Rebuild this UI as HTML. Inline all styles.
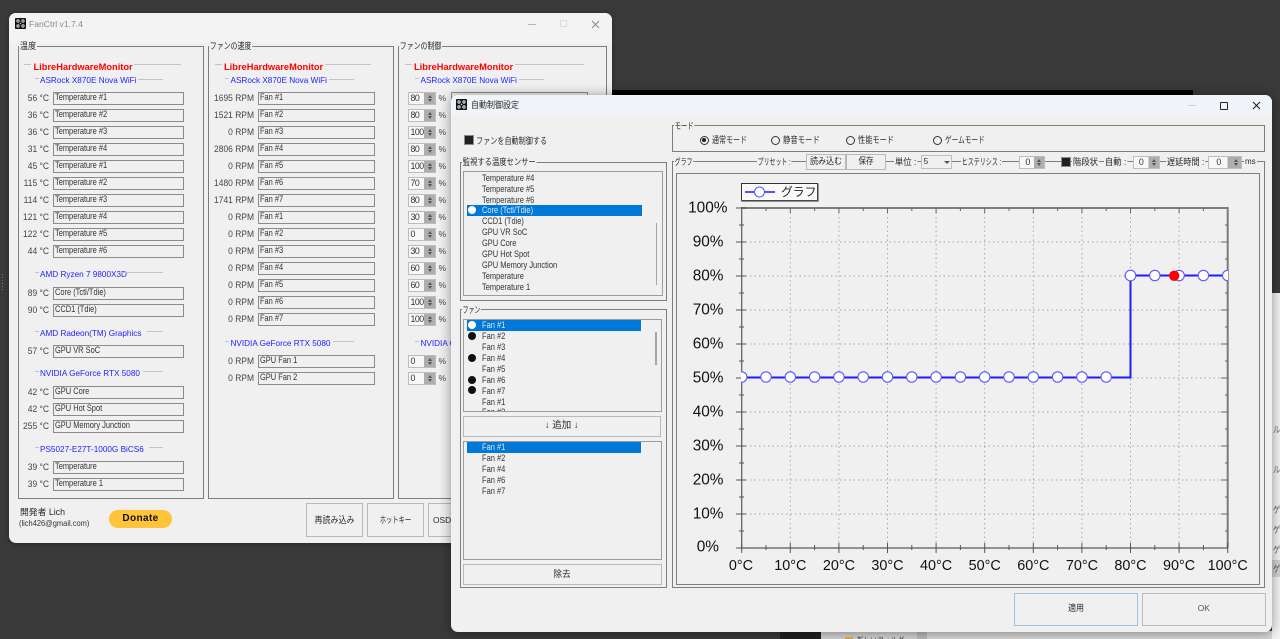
<!DOCTYPE html>
<html lang="ja"><head><meta charset="utf-8"><title>FanCtrl</title>
<style>
html,body{margin:0;padding:0;width:1280px;height:639px;overflow:hidden;background:#3a3a3a}
body{position:relative;font-family:"Liberation Sans","Noto Sans CJK JP",sans-serif;font-size:8.5px;color:#333}
div,span,i,svg{position:absolute;box-sizing:border-box}
i{font-style:normal}
.x{white-space:nowrap;line-height:10px}
.j{font-size:9px;white-space:nowrap;line-height:10px;color:#2a2a2a;transform:scaleX(var(--k,.8));transform-origin:0 50%}
.w{background:#f0f0f0;border-radius:7px;overflow:hidden}
.g{border:1.5px solid #7d7d7d}
.l{background:#f0f0f0;white-space:nowrap;line-height:10px;font-size:9px;padding:0 1px;color:#2a2a2a;transform:scaleX(var(--k,.8));transform-origin:0 50%}
.h{white-space:nowrap;line-height:10px;font-weight:bold;color:#f00;font-size:9.3px}
.n{white-space:nowrap;line-height:10px;color:#2222ff;font-size:8.2px}
.d{height:1px;background:#c4c4c4}
.r{left:0;width:0;height:13px}
.v{line-height:13px;text-align:right;white-space:nowrap;color:#444;left:0;font-size:9.2px;transform:scaleX(.92);transform-origin:100% 50%}
.f{height:13px;border:1.7px solid #8b8b8b;background:#f0f0f0;overflow:hidden}
.f span{left:1px;top:0;line-height:9px;white-space:nowrap;font-size:9.2px;transform:scaleX(.81);transform-origin:0 0;color:#333}
.a .v{width:49px}.a .f{left:53px;width:130.5px}
.b .v{width:254px}.b .f{left:258px;width:116.5px}
.s{height:13px;width:27.5px;left:408px;background:linear-gradient(90deg,#f8f8f8 58%,#aeaeae 58%);border:1px solid #bdbdbd;line-height:10.5px;padding-left:1.5px;color:#333;letter-spacing:-.5px;font-size:8.8px}
.s::before,.s::after{content:"";position:absolute;right:3px;border-left:2.5px solid transparent;border-right:2.5px solid transparent}
.s::before{top:2px;border-bottom:3px solid #555}
.s::after{bottom:2px;border-top:3px solid #555}
.p{left:438.5px;line-height:13px;color:#444}
.bt{border:1.7px solid #b9b9b9;background:#f0f0f0;text-align:center;color:#2a2a2a;font-size:9px;white-space:nowrap}
.bt u{position:static;display:inline-block;text-decoration:none;transform:scaleX(var(--k,.89))}
.lb{border:1.5px solid #9c9c9c;background:#f0f0f0;overflow:hidden}
.it{left:482px;line-height:10px;white-space:nowrap;transform:scaleX(.83);transform-origin:0 0;color:#333;font-size:9px}
.sel{background:#0078d7}
.dot{width:8px;height:8px;border-radius:50%;background:#111;left:468px}
.rd{width:9px;height:9px;border-radius:50%;border:1px solid #333;background:#f0f0f0;top:135.5px}
.ck{width:10px;height:10px;border:1.5px solid #8b8b8b;background:#222}
</style></head><body>

<!-- desktop background bits -->
<div style="left:612px;top:90px;width:581px;height:6px;background:#000"></div>
<div style="left:780px;top:631px;width:41px;height:8px;background:#1f1f1f"></div>
<div style="left:821px;top:631px;width:96px;height:8px;background:#d4d4d4"></div>
<div style="left:917px;top:631px;width:10px;height:8px;background:#bdbdbd"></div>
<div style="left:927px;top:631px;width:353px;height:8px;background:#d8d8d8"></div>
<div style="left:1272px;top:293px;width:8px;height:346px;background:#f3f3f3"></div>
<div style="left:1272px;top:560px;width:8px;height:17px;background:#d2d2d2"></div>
<div class="j" style="left:1273px;top:425px;color:#666;--k:.8">ル</div>
<div class="j" style="left:1273px;top:465px;color:#666;--k:.8">ル</div>
<div class="j" style="left:1273px;top:505px;color:#555;--k:.8">ゲ</div>
<div class="j" style="left:1273px;top:525px;color:#555;--k:.8">ゲ</div>
<div class="j" style="left:1273px;top:545px;color:#555;--k:.8">ゲ</div>
<div class="j" style="left:1273px;top:564px;color:#555;--k:.8">ゲ</div>
<div style="left:845px;top:637px;width:8px;height:2px;background:#e2b04a"></div>
<div class="j" style="left:857px;top:635.5px;color:#444;--k:.75">新しいフォルダー</div>
<div style="left:2px;top:274px;width:1px;height:16px;background:repeating-linear-gradient(180deg,#777 0 1px,transparent 1px 3px)"></div>

<!-- main window -->
<div class="w" style="left:9px;top:13px;width:603px;height:530px;box-shadow:0 1px 6px rgba(0,0,0,.35)">
<div style="left:0;top:0;width:603px;height:30px;background:#f3f3f3"></div>
</div>
<div style="left:0;top:0;width:1280px;height:639px">
<svg style="left:15px;top:18px" width="11" height="11" viewBox="0 0 11 11"><rect width="11" height="11" rx="1" fill="#111"/><circle cx="3" cy="3" r="1.7" fill="#ccc"/><circle cx="8" cy="3" r="1.7" fill="#ccc"/><circle cx="3" cy="8" r="1.7" fill="#ccc"/><circle cx="8" cy="8" r="1.7" fill="#ccc"/><circle cx="3" cy="3" r=".6" fill="#111"/><circle cx="8" cy="3" r=".6" fill="#111"/><circle cx="3" cy="8" r=".6" fill="#111"/><circle cx="8" cy="8" r=".6" fill="#111"/><circle cx="5.5" cy="5.5" r=".7" fill="#ccc"/></svg>
<div class="x" style="left:29px;top:19px;color:#8a8a8a;font-size:8.6px">FanCtrl v1.7.4</div>
<div style="left:528px;top:24px;width:8px;height:1px;background:#b5b5b5"></div>
<div style="left:560px;top:20px;width:7px;height:7px;border:1px solid #dcdcdc"></div>
<svg style="left:591px;top:19.5px" width="9" height="9"><path d="M1 1L8 8M8 1L1 8" stroke="#888" fill="none"/></svg>

<!-- group 1 -->
<div class="g" style="left:17.5px;top:46px;width:186px;height:452.5px"></div>
<div class="l" style="left:19px;top:41px;--k:.9">温度</div>
<div class="g" style="left:207.5px;top:46px;width:186px;height:452.5px"></div>
<div class="l" style="left:208.5px;top:41px;--k:.77">ファンの速度</div>
<div class="g" style="left:397.5px;top:46px;width:209px;height:452.5px"></div>
<div class="l" style="left:398.5px;top:41px;--k:.77">ファンの制御</div>

<div class="d" style="left:24px;top:64px;width:7px"></div><div class="h" style="left:33.5px;top:62px">LibreHardwareMonitor</div><div class="d" style="left:134px;top:64px;width:47px"></div>
<div class="d" style="left:34.5px;top:78px;width:4px"></div><div class="n" style="left:40px;top:76px">ASRock X870E Nova WiFi</div><div class="d" style="left:138px;top:78.5px;width:25px"></div>

<div class="a" style="left:0;top:0">
<div class="r" style="top:92px"><span class="v">56 °C</span><span class="f"><span>Temperature #1</span></span></div>
<div class="r" style="top:109px"><span class="v">36 °C</span><span class="f"><span>Temperature #2</span></span></div>
<div class="r" style="top:126px"><span class="v">36 °C</span><span class="f"><span>Temperature #3</span></span></div>
<div class="r" style="top:143px"><span class="v">31 °C</span><span class="f"><span>Temperature #4</span></span></div>
<div class="r" style="top:160px"><span class="v">45 °C</span><span class="f"><span>Temperature #1</span></span></div>
<div class="r" style="top:177px"><span class="v">115 °C</span><span class="f"><span>Temperature #2</span></span></div>
<div class="r" style="top:194px"><span class="v">114 °C</span><span class="f"><span>Temperature #3</span></span></div>
<div class="r" style="top:211px"><span class="v">121 °C</span><span class="f"><span>Temperature #4</span></span></div>
<div class="r" style="top:228px"><span class="v">122 °C</span><span class="f"><span>Temperature #5</span></span></div>
<div class="r" style="top:245px"><span class="v">44 °C</span><span class="f"><span>Temperature #6</span></span></div>
<div class="r" style="top:287px"><span class="v">89 °C</span><span class="f"><span>Core (Tctl/Tdie)</span></span></div>
<div class="r" style="top:304px"><span class="v">90 °C</span><span class="f"><span>CCD1 (Tdie)</span></span></div>
<div class="r" style="top:345px"><span class="v">57 °C</span><span class="f"><span>GPU VR SoC</span></span></div>
<div class="r" style="top:386px"><span class="v">42 °C</span><span class="f"><span>GPU Core</span></span></div>
<div class="r" style="top:403px"><span class="v">42 °C</span><span class="f"><span>GPU Hot Spot</span></span></div>
<div class="r" style="top:420px"><span class="v">255 °C</span><span class="f"><span>GPU Memory Junction</span></span></div>
<div class="r" style="top:461px"><span class="v">39 °C</span><span class="f"><span>Temperature</span></span></div>
<div class="r" style="top:478px"><span class="v">39 °C</span><span class="f"><span>Temperature 1</span></span></div>
</div>
<div class="d" style="left:34.5px;top:272px;width:4px"></div><div class="n" style="left:40px;top:270px">AMD Ryzen 7 9800X3D</div><div class="d" style="left:120px;top:272px;width:43px"></div>
<div class="d" style="left:34.5px;top:331px;width:4px"></div><div class="n" style="left:40px;top:329px">AMD Radeon(TM) Graphics</div><div class="d" style="left:147px;top:331px;width:16px"></div>
<div class="d" style="left:34.5px;top:371px;width:4px"></div><div class="n" style="left:40px;top:369px">NVIDIA GeForce RTX 5080</div><div class="d" style="left:143px;top:371px;width:20px"></div>
<div class="d" style="left:34.5px;top:447px;width:4px"></div><div class="n" style="left:40px;top:445px">PS5027-E27T-1000G BiCS6</div><div class="d" style="left:149px;top:447px;width:14px"></div>

<!-- group 2 -->
<div class="d" style="left:215px;top:64px;width:7px"></div><div class="h" style="left:224px;top:62px">LibreHardwareMonitor</div><div class="d" style="left:325px;top:64px;width:46px"></div>
<div class="d" style="left:225px;top:78px;width:4px"></div><div class="n" style="left:230.5px;top:76px">ASRock X870E Nova WiFi</div><div class="d" style="left:329px;top:78.5px;width:25px"></div>
<div class="b" style="left:0;top:0">
<div class="r" style="top:92px"><span class="v">1695 RPM</span><span class="f"><span>Fan #1</span></span></div>
<div class="r" style="top:109px"><span class="v">1521 RPM</span><span class="f"><span>Fan #2</span></span></div>
<div class="r" style="top:126px"><span class="v">0 RPM</span><span class="f"><span>Fan #3</span></span></div>
<div class="r" style="top:143px"><span class="v">2806 RPM</span><span class="f"><span>Fan #4</span></span></div>
<div class="r" style="top:160px"><span class="v">0 RPM</span><span class="f"><span>Fan #5</span></span></div>
<div class="r" style="top:177px"><span class="v">1480 RPM</span><span class="f"><span>Fan #6</span></span></div>
<div class="r" style="top:194px"><span class="v">1741 RPM</span><span class="f"><span>Fan #7</span></span></div>
<div class="r" style="top:211px"><span class="v">0 RPM</span><span class="f"><span>Fan #1</span></span></div>
<div class="r" style="top:228px"><span class="v">0 RPM</span><span class="f"><span>Fan #2</span></span></div>
<div class="r" style="top:245px"><span class="v">0 RPM</span><span class="f"><span>Fan #3</span></span></div>
<div class="r" style="top:262px"><span class="v">0 RPM</span><span class="f"><span>Fan #4</span></span></div>
<div class="r" style="top:279px"><span class="v">0 RPM</span><span class="f"><span>Fan #5</span></span></div>
<div class="r" style="top:296px"><span class="v">0 RPM</span><span class="f"><span>Fan #6</span></span></div>
<div class="r" style="top:313px"><span class="v">0 RPM</span><span class="f"><span>Fan #7</span></span></div>
<div class="r" style="top:355px"><span class="v">0 RPM</span><span class="f"><span>GPU Fan 1</span></span></div>
<div class="r" style="top:372px"><span class="v">0 RPM</span><span class="f"><span>GPU Fan 2</span></span></div>
</div>
<div class="d" style="left:225px;top:341px;width:4px"></div><div class="n" style="left:230.5px;top:339px">NVIDIA GeForce RTX 5080</div><div class="d" style="left:333px;top:341px;width:21px"></div>

<!-- group 3 -->
<div class="d" style="left:405px;top:64px;width:7px"></div><div class="h" style="left:414px;top:62px">LibreHardwareMonitor</div><div class="d" style="left:515px;top:64px;width:69px"></div>
<div class="d" style="left:415px;top:78px;width:4px"></div><div class="n" style="left:420.5px;top:76px">ASRock X870E Nova WiFi</div><div class="d" style="left:519px;top:78.5px;width:25px"></div>
<div class="f" style="left:451px;top:92px;width:136.5px"></div>
<div class="s" style="top:92px">80</div><div class="p" style="top:92px">%</div>
<div class="s" style="top:109px">80</div><div class="p" style="top:109px">%</div>
<div class="s" style="top:126px">100</div><div class="p" style="top:126px">%</div>
<div class="s" style="top:143px">80</div><div class="p" style="top:143px">%</div>
<div class="s" style="top:160px">100</div><div class="p" style="top:160px">%</div>
<div class="s" style="top:177px">70</div><div class="p" style="top:177px">%</div>
<div class="s" style="top:194px">80</div><div class="p" style="top:194px">%</div>
<div class="s" style="top:211px">30</div><div class="p" style="top:211px">%</div>
<div class="s" style="top:228px">0</div><div class="p" style="top:228px">%</div>
<div class="s" style="top:245px">30</div><div class="p" style="top:245px">%</div>
<div class="s" style="top:262px">60</div><div class="p" style="top:262px">%</div>
<div class="s" style="top:279px">60</div><div class="p" style="top:279px">%</div>
<div class="s" style="top:296px">100</div><div class="p" style="top:296px">%</div>
<div class="s" style="top:313px">100</div><div class="p" style="top:313px">%</div>
<div class="s" style="top:355px">0</div><div class="p" style="top:355px">%</div>
<div class="s" style="top:372px">0</div><div class="p" style="top:372px">%</div>
<div class="d" style="left:415px;top:341px;width:4px"></div><div class="n" style="left:420.5px;top:339px">NVIDIA GeForce RTX 5080</div>

<!-- main footer -->
<div class="j" style="left:20px;top:507px;font-size:8.8px;--k:1">開発者 Lich</div>
<div class="x" style="left:19px;top:518px;font-size:8.6px;transform:scaleX(.87);transform-origin:0 0">(lich426@gmail.com)</div>
<div style="left:109px;top:510px;width:63px;height:18px;border-radius:9px;background:#ffc439;text-align:center;font-weight:bold;font-size:10px;line-height:18px;color:#111;letter-spacing:.4px">Donate</div>
<div class="bt" style="left:306px;top:503px;width:57px;height:34px;line-height:32px"><u>再読み込み</u></div>
<div class="bt" style="left:367px;top:503px;width:57px;height:34px;line-height:32px"><u style="--k:.7">ホットキー</u></div>
<div class="bt" style="left:428px;top:503px;width:57px;height:34px;line-height:32px;text-align:left;padding-left:4px;font-size:8.4px">OSD</div>
</div>

<!-- second window -->
<div class="w" style="left:451px;top:95px;width:821px;height:536.5px;box-shadow:0 1px 12px rgba(0,0,0,.42)">
<div style="left:0;top:0;width:821px;height:21px;background:#f1f5fa"></div>
</div>
<svg style="left:456px;top:99px" width="11" height="11" viewBox="0 0 11 11"><rect width="11" height="11" rx="1" fill="#111"/><circle cx="3" cy="3" r="1.7" fill="#ddd"/><circle cx="8" cy="3" r="1.7" fill="#ddd"/><circle cx="3" cy="8" r="1.7" fill="#ddd"/><circle cx="8" cy="8" r="1.7" fill="#ddd"/><circle cx="3" cy="3" r=".6" fill="#111"/><circle cx="8" cy="3" r=".6" fill="#111"/><circle cx="3" cy="8" r=".6" fill="#111"/><circle cx="8" cy="8" r=".6" fill="#111"/><circle cx="5.5" cy="5.5" r=".7" fill="#ddd"/></svg>
<div class="j" style="left:471px;top:100px;--k:.89">自動制御設定</div>
<div style="left:1188px;top:105px;width:8px;height:1px;background:#d0d0d0"></div>
<div style="left:1220px;top:102px;width:7.5px;height:7.5px;border:1.2px solid #222;border-radius:1px"></div>
<svg style="left:1252px;top:101px" width="9" height="9"><path d="M1 1L8 8M8 1L1 8" stroke="#222" fill="none" stroke-width="1.1"/></svg>

<div class="ck" style="left:464px;top:135px"></div>
<div class="j" style="left:476px;top:136px;--k:.79">ファンを自動制御する</div>

<!-- mode -->
<div class="g" style="left:672px;top:125px;width:593px;height:26.5px"></div>
<div class="l" style="left:674px;top:120.5px;--k:.7">モード</div>
<div class="rd" style="left:699.5px"><i style="left:1.8px;top:1.8px;width:3.6px;height:3.6px;border-radius:50%;background:#222"></i></div>
<div class="j" style="left:712px;top:135px;--k:.78">通常モード</div>
<div class="rd" style="left:771px"></div><div class="j" style="left:783px;top:135px;--k:.82">静音モード</div>
<div class="rd" style="left:845.5px"></div><div class="j" style="left:858px;top:135px;--k:.8">性能モード</div>
<div class="rd" style="left:933px"></div><div class="j" style="left:945px;top:135px;--k:.74">ゲームモード</div>

<!-- graph group -->
<div class="g" style="left:672px;top:161px;width:593px;height:427px"></div>
<div class="g" style="left:676px;top:173px;width:584px;height:412px"></div>
<div class="l" style="left:673.5px;top:156.5px;--k:.66">グラフ</div>
<div class="l" style="left:757px;top:156.5px;--k:.66">プリセット :</div>
<div class="bt" style="left:806px;top:154px;width:39.5px;height:15.5px;line-height:12.5px"><u>読み込む</u></div>
<div class="bt" style="left:846px;top:154px;width:39.5px;height:15.5px;line-height:12.5px"><u style="--k:.83">保存</u></div>
<div class="l" style="left:893.5px;top:156.5px;--k:.93">単位 :</div>
<div style="left:921px;top:155px;width:31px;height:14px;border:1px solid #c0c0c0;background:#f0f0f0;line-height:10px;padding-left:1.5px;font-size:8.4px">5</div>
<div style="left:944px;top:161px;border-left:3px solid transparent;border-right:3px solid transparent;border-top:3px solid #555"></div>
<div class="l" style="left:960.5px;top:156.5px;--k:.67">ヒステリシス :</div>
<div class="s" style="left:1019px;top:155.5px;width:26px">&nbsp;&nbsp;0</div>
<div class="ck" style="left:1060.5px;top:157px"></div>
<div class="l" style="left:1072px;top:157px;--k:.93">階段状</div>
<div class="l" style="left:1104px;top:156.5px;--k:.93">自動 :</div>
<div class="s" style="left:1132.5px;top:156px;width:27px">&nbsp;&nbsp;0</div>
<div class="l" style="left:1165.5px;top:156.5px;--k:.91">遅延時間 :</div>
<div class="s" style="left:1208px;top:156px;width:34px">&nbsp;&nbsp;&nbsp;0</div>
<div class="l" style="left:1244px;top:157px;font-size:8px;--k:1">ms</div>

<!-- chart -->
<svg style="left:0;top:0" width="1280" height="639" viewBox="0 0 1280 639" font-family="Liberation Sans, sans-serif">
<defs><clipPath id="c"><rect x="741" y="200" width="487" height="350"/></clipPath></defs>
<path d="M790.3 208V548M838.9 208V548M887.5 208V548M936.1 208V548M984.7 208V548M1033.3 208V548M1081.9 208V548M1130.5 208V548M1179.1 208V548M741 242H1228M741 276H1228M741 310H1228M741 344H1228M741 378H1228M741 412H1228M741 446H1228M741 480H1228M741 514H1228" stroke="#a8a8a8" stroke-width="1" stroke-dasharray="1.5 3" fill="none"/>
<path d="M741.7 208H1227.7V548" stroke="#7c7c7c" stroke-width="2" fill="none"/>
<path d="M741.7 207V548H1227.7" stroke="#5a5a5a" stroke-width="1.2" fill="none"/>
<path d="M736 208H746M736 242H746M736 276H746M736 310H746M736 344H746M736 378H746M736 412H746M736 446H746M736 480H746M736 514H746M736 548H746M739 225H744M739 259H744M739 293H744M739 327H744M739 361H744M739 395H744M739 429H744M739 463H744M739 497H744M739 531H744M741.7 543V553M790.3 543V553M838.9 543V553M887.5 543V553M936.1 543V553M984.7 543V553M1033.3 543V553M1081.9 543V553M1130.5 543V553M1179.1 543V553M1227.7 543V553M766 545V550M814.6 545V550M863.2 545V550M911.8 545V550M960.4 545V550M1009 545V550M1057.6 545V550M1106.2 545V550M1154.8 545V550M1203.4 545V550" stroke="#555" stroke-width="1" fill="none"/>
<path d="M1221 242H1228M1221 276H1228M1221 310H1228M1221 344H1228M1221 378H1228M1221 412H1228M1221 446H1228M1221 480H1228M1221 514H1228M1225 225H1228M1225 259H1228M1225 293H1228M1225 327H1228M1225 361H1228M1225 395H1228M1225 429H1228M1225 463H1228M1225 497H1228M1225 531H1228M790.3 208V213M838.9 208V213M887.5 208V213M936.1 208V213M984.7 208V213M1033.3 208V213M1081.9 208V213M1130.5 208V213M1179.1 208V213M766 208V211M814.6 208V211M863.2 208V211M911.8 208V211M960.4 208V211M1009 208V211M1057.6 208V211M1106.2 208V211M1154.8 208V211M1203.4 208V211" stroke="#666" stroke-width="1" fill="none"/>
<g font-size="15.4" fill="#111" text-anchor="end">
<text x="727.5" y="212.5">100%</text><text x="723.5" y="246.5">90%</text><text x="723.5" y="280.5">80%</text><text x="723.5" y="314.5">70%</text><text x="723.5" y="348.5">60%</text><text x="723.5" y="382.5">50%</text><text x="723.5" y="416.5">40%</text><text x="723.5" y="450.5">30%</text><text x="723.5" y="484.5">20%</text><text x="723.5" y="518.5">10%</text><text x="719" y="551.5">0%</text>
</g>
<g font-size="14.4" fill="#111" text-anchor="middle">
<text x="741" y="570">0°C</text><text x="790.3" y="570">10°C</text><text x="838.9" y="570">20°C</text><text x="887.5" y="570">30°C</text><text x="936.1" y="570">40°C</text><text x="984.7" y="570">50°C</text><text x="1033.3" y="570">60°C</text><text x="1081.9" y="570">70°C</text><text x="1130.5" y="570">80°C</text><text x="1179.1" y="570">90°C</text><text x="1227.7" y="570">100°C</text>
</g>
<g clip-path="url(#c)">
<path d="M741.7 377.5H1130.5V275.5H1228" stroke="#1c1cff" stroke-width="2" fill="none"/>
<g fill="#fff" stroke="#5a5aff" stroke-width="1.1">
<circle cx="741.7" cy="377" r="5.2"/><circle cx="766" cy="377" r="5.2"/><circle cx="790.3" cy="377" r="5.2"/><circle cx="814.6" cy="377" r="5.2"/><circle cx="838.9" cy="377" r="5.2"/><circle cx="863.2" cy="377" r="5.2"/><circle cx="887.5" cy="377" r="5.2"/><circle cx="911.8" cy="377" r="5.2"/><circle cx="936.1" cy="377" r="5.2"/><circle cx="960.4" cy="377" r="5.2"/><circle cx="984.7" cy="377" r="5.2"/><circle cx="1009" cy="377" r="5.2"/><circle cx="1033.3" cy="377" r="5.2"/><circle cx="1057.6" cy="377" r="5.2"/><circle cx="1081.9" cy="377" r="5.2"/><circle cx="1106.2" cy="377" r="5.2"/><circle cx="1130.5" cy="275.5" r="5.3"/><circle cx="1154.8" cy="275.5" r="5.2"/><circle cx="1179.1" cy="275.5" r="5.2"/><circle cx="1203.4" cy="275.5" r="5.2"/><circle cx="1227.7" cy="275.5" r="5.2"/>
</g>
<circle cx="1174.2" cy="275.8" r="5.2" fill="#f00"/>
</g>
<rect x="741.5" y="183.5" width="76" height="17" fill="#fafafa" stroke="#333" stroke-width="1"/>
<path d="M818 183.5V201H741.5" stroke="#555" stroke-width="1.2" fill="none"/>
<path d="M745 192H775" stroke="#1c1cff" stroke-width="1.6"/>
<circle cx="759.5" cy="192" r="5" fill="#fff" stroke="#5a5aff" stroke-width="1.1"/>
<text x="781" y="196" font-size="11.8" fill="#222" font-family="Liberation Sans, Noto Sans CJK JP, sans-serif">グラフ</text>
</svg>

<!-- sensor list -->
<div class="g" style="left:460px;top:162px;width:207px;height:139px"></div>
<div class="l" style="left:461.5px;top:157px;--k:.81">監視する温度センサー</div>
<div class="lb" style="left:463px;top:171px;width:200px;height:125px"></div>
<div class="sel" style="left:467px;top:205px;width:175px;height:11px"></div>
<div class="dot" style="top:206px;background:#fff"></div>
<div class="it" style="top:172.5px">Temperature #4</div>
<div class="it" style="top:183.5px">Temperature #5</div>
<div class="it" style="top:194.5px">Temperature #6</div>
<div class="it" style="top:205px;color:#dfe9f6">Core (Tctl/Tdie)</div>
<div class="it" style="top:216px">CCD1 (Tdie)</div>
<div class="it" style="top:227px">GPU VR SoC</div>
<div class="it" style="top:238px">GPU Core</div>
<div class="it" style="top:249px">GPU Hot Spot</div>
<div class="it" style="top:260px">GPU Memory Junction</div>
<div class="it" style="top:271px">Temperature</div>
<div class="it" style="top:282px">Temperature 1</div>
<div style="left:655.5px;top:222.5px;width:1.5px;height:62px;background:#a5a5a5"></div>

<!-- fan group -->
<div class="g" style="left:460px;top:309px;width:207px;height:279px"></div>
<div class="l" style="left:461.5px;top:304.5px;--k:.65">ファン</div>
<div class="lb" style="left:463px;top:319px;width:199px;height:92.5px;z-index:1">
<div class="sel" style="left:2.5px;top:0;width:174.5px;height:11px"></div>
<div class="dot" style="left:3.5px;top:1px;background:#fff"></div>
<div class="dot" style="left:3.5px;top:11.5px"></div>
<div class="dot" style="left:3.5px;top:33.5px"></div>
<div class="dot" style="left:3.5px;top:55.5px"></div>
<div class="dot" style="left:3.5px;top:66px"></div>
<div class="it" style="left:17.5px;top:.2px;color:#dfe9f6">Fan #1</div>
<div class="it" style="left:17.5px;top:10.8px">Fan #2</div>
<div class="it" style="left:17.5px;top:21.8px">Fan #3</div>
<div class="it" style="left:17.5px;top:32.8px">Fan #4</div>
<div class="it" style="left:17.5px;top:43.5px">Fan #5</div>
<div class="it" style="left:17.5px;top:54.5px">Fan #6</div>
<div class="it" style="left:17.5px;top:65.5px">Fan #7</div>
<div class="it" style="left:17.5px;top:76.5px">Fan #1</div>
<div class="it" style="left:17.5px;top:86.5px">Fan #2</div>
<div style="left:191px;top:12px;width:1.5px;height:33px;background:#a5a5a5"></div>
</div>
<div class="bt" style="left:463px;top:416px;width:197.5px;height:21px;line-height:18px;font-size:9.5px">↓ 追加 ↓</div>
<div class="lb" style="left:463px;top:441px;width:199px;height:118.5px">
<div class="sel" style="left:2.5px;top:0;width:174.5px;height:11px"></div>
<div class="it" style="left:17.5px;top:.2px;color:#dfe9f6">Fan #1</div>
<div class="it" style="left:17.5px;top:11.2px">Fan #2</div>
<div class="it" style="left:17.5px;top:21.8px">Fan #4</div>
<div class="it" style="left:17.5px;top:32.5px">Fan #6</div>
<div class="it" style="left:17.5px;top:43.5px">Fan #7</div>
</div>
<div class="bt" style="left:463px;top:564px;width:199px;height:21px;line-height:18px"><u style="--k:.95">除去</u></div>

<!-- dialog buttons -->
<div class="bt" style="left:1014px;top:593px;width:123.5px;height:32.5px;line-height:29px;border-color:#a3bfd9"><u>適用</u></div>
<div class="bt" style="left:1142px;top:593px;width:123.5px;height:32.5px;line-height:29px;font-size:8.4px;color:#555">OK</div>
</body></html>
